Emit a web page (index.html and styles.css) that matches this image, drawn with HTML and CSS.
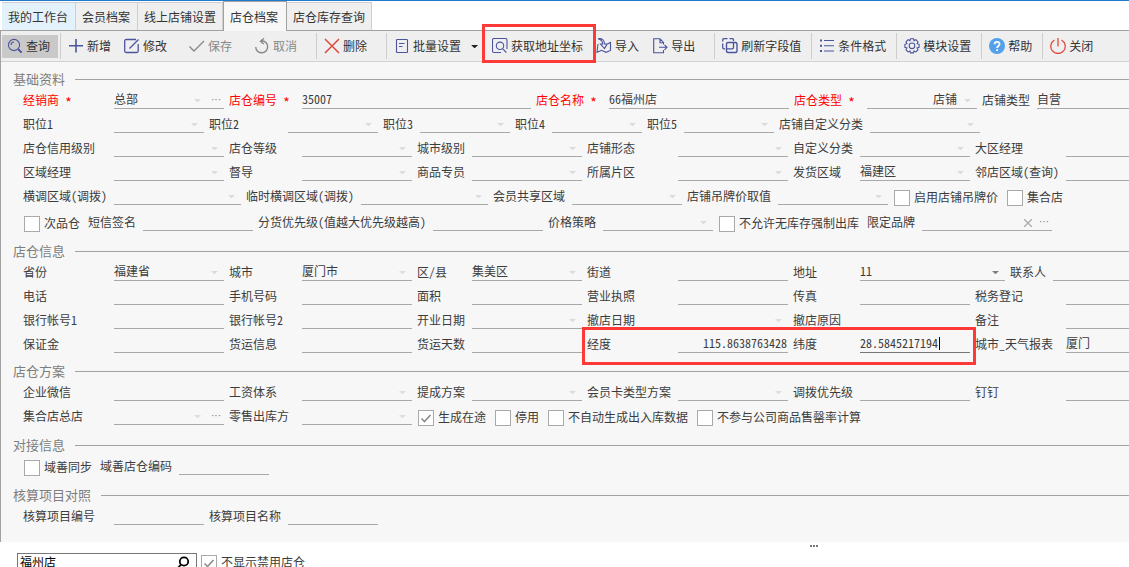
FILE: index.html
```html
<!DOCTYPE html>
<html lang="zh-CN">
<head>
<meta charset="utf-8">
<title>店仓档案</title>
<link rel="stylesheet" href="styles.css">
</head>
<body>
<div class="app">
<nav class="tabs">
  <div class="tab tab-home">我的工作台</div>
  <div class="tab tab-member">会员档案</div>
  <div class="tab tab-online">线上店铺设置</div>
  <div class="tab tab-active">店仓档案</div>
  <div class="tab tab-stock">店仓库存查询</div>
</nav>
<main class="panel">
<div class="toolbar">
  <div class="tool tool-on"><svg class="ico" viewBox="0 0 16 16"><circle cx="7" cy="7" r="5.6"/><path d="M4 7a3 3 0 0 1 3-3"/><path d="M11 11l3.6 3.6" stroke-width="2"/></svg>查询</div>
  <i class="sep"></i>
  <div class="tool"><svg class="ico" viewBox="0 0 16 16"><path d="M8 1v13.500M1 7.700h14" stroke-width="1.600"/></svg>新增</div>
  <div class="tool"><svg class="ico" viewBox="0 0 16 16"><path d="M12 1.500H2.200q-1.500 0-1.500 1.500v10q0 1.500 1.500 1.500h10.500q1.500 0 1.500-1.500V6M6 10l8.500-8.500M5.500 10.500l1-1" stroke-width="1.300"/></svg>修改</div>
  <div class="tool tool-off"><svg class="ico" viewBox="0 0 16 16"><path d="M.5 8.500l4.500 4.500L15 3" stroke-width="1.400"/></svg>保存</div>
  <div class="tool tool-off"><svg class="ico" viewBox="0 0 16 16"><path d="M1.700 9a6 6 0 1 0 6-6.200H7M10 .3L6.500 3.200 9.700 6" stroke-width="1.400"/></svg>取消</div>
  <i class="sep sep-wide"></i>
  <div class="tool"><svg class="ico red" viewBox="0 0 16 16"><path d="M1 1l14 14M15 1L1 15" stroke-width="1.500"/></svg>删除</div>
  <i class="sep sep-wide"></i>
  <div class="tool tool-menu"><svg class="ico" viewBox="0 0 16 16"><rect x="2.500" y="1.500" width="11" height="13" rx=".8"/><path d="M5 5.500h5.500M5 8.500h3.500"/></svg>批量设置<i class="arrow arrow-dark"></i></div>
  <div class="tool"><svg class="ico" viewBox="0 0 16 16"><path d="M9 14.500H2q-1.500 0-1.500-1.500V2Q.5.500 2 .5h11.500q1.500 0 1.500 1.500V11"/><circle cx="8" cy="7.800" r="3.700"/><path d="M10.800 10.800l3.500 3.700"/></svg>获取地址坐标</div>
  <div class="tool"><svg class="ico" viewBox="0 0 16 16"><path d="M2 6L1 14.300l4.500-2 4.500 2 4.500-1.800V4.500l-4 2M2 .8c4-.8 6.500 1.200 6.500 5.200h2.700L8.500 10.500 4.500 6h2.200C6.700 3.500 5 1.500 2 .8"/></svg>导入</div>
  <div class="tool"><svg class="ico" viewBox="0 0 16 16"><path d="M11.500 6.500V4.500L8 .7H1.700v14h9.800V12M8 .7v4h3.500M7 9.300h8M12.500 6.800l2.500 2.500-2.500 2.500"/></svg>导出</div>
  <i class="sep sep-wide"></i>
  <div class="tool"><svg class="ico" viewBox="0 0 16 16"><path d="M11.500 3V2q0-1.300-1.300-1.300H7.500M5.500.7H2Q.7.700.7 2v1.500M.7 5.500v4q0 1.300 1.300 1.300h1" stroke-width="1.300"/><rect x="4.500" y="4.500" width="10.500" height="10" rx="1.500" stroke-width="1.400"/><path d="M4.500 10.800h5.500q1.500 0 1.500-1.300V4.500" stroke-width="1.300"/></svg>刷新字段值</div>
  <i class="sep"></i>
  <div class="tool"><svg class="ico" viewBox="0 0 16 16"><path d="M1 2.500h2M1 7.800h2M1 13h2" stroke-width="2"/><path d="M5 2.500h10M5 7.800h10M5 13h10"/></svg>条件格式</div>
  <i class="sep"></i>
  <div class="tool"><svg class="ico" viewBox="0 0 16 16"><path d="M6.500.8h3l.5 1.800 1.900-.9 2.100 2.100-.9 1.900 2 .6v3l-2 .6.9 1.900-2.100 2.100-1.900-.9-.5 1.900h-3L6 13l-1.900.9L2 11.800l.9-1.900-2-.6v-3l2-.6L2 3.800l2.100-2.100L6 2.600z"/><circle cx="8" cy="7.800" r="2.800"/></svg>模块设置</div>
  <i class="sep"></i>
  <div class="tool"><svg class="ico" viewBox="0 0 16 16"><circle cx="8" cy="8" r="8" fill="#52a1ea" stroke="none"/><path d="M5.600 6.300c0-3.300 5-3.200 5-.2 0 1.900-2.500 1.900-2.500 3.900M8.100 11.300v1.700" stroke="#fff" stroke-width="1.800"/></svg>帮助</div>
  <i class="sep"></i>
  <div class="tool"><svg class="ico red" viewBox="0 0 16 16"><path d="M4.500 2A7.200 7.200 0 1 0 11.500 2M8 0v8.500" stroke-width="1.300"/></svg>关闭</div>
</div>

<section>
  <h2 class="group group-first">基础资料</h2>
  <div class="row cols-main">
    <label class="req">经销商 <b class="star">*</b></label><div class="inp">总部<i class="arrow arrow-in"></i><b class="more">···</b></div>
    <label class="req">店仓编号 <b class="star">*</b></label><div class="inp">35007</div>
    <label class="req">店仓名称 <b class="star">*</b></label><div class="inp">66福州店</div>
    <label class="req">店仓类型 <b class="star">*</b></label><div class="inp inp-type">店铺<i class="arrow"></i></div>
    <label>店铺类型</label><div class="inp">自营</div>
  </div>
  <div class="row cols-post">
    <label>职位1</label><div class="inp"><i class="arrow"></i></div>
    <label>职位2</label><div class="inp"><i class="arrow"></i></div>
    <label>职位3</label><div class="inp"><i class="arrow"></i></div>
    <label>职位4</label><div class="inp"><i class="arrow"></i></div>
    <label>职位5</label><div class="inp"><i class="arrow"></i></div>
    <label>店铺自定义分类</label><div class="inp"><i class="arrow"></i></div>
  </div>
  <div class="row cols-std">
    <label>店仓信用级别</label><div class="inp"><i class="arrow"></i></div>
    <label>店仓等级</label><div class="inp"><i class="arrow"></i></div>
    <label>城市级别</label><div class="inp"><i class="arrow"></i></div>
    <label>店铺形态</label><div class="inp"><i class="arrow"></i></div>
    <label>自定义分类</label><div class="inp"><i class="arrow"></i></div>
    <label>大区经理</label><div class="inp"></div>
  </div>
  <div class="row cols-std">
    <label>区域经理</label><div class="inp"><i class="arrow"></i></div>
    <label>督导</label><div class="inp"><i class="arrow"></i></div>
    <label>商品专员</label><div class="inp"><i class="arrow"></i></div>
    <label>所属片区</label><div class="inp"><i class="arrow"></i></div>
    <label>发货区域</label><div class="inp">福建区<i class="arrow"></i></div>
    <label>邻店区域(查询)</label><div class="inp"></div>
  </div>
  <div class="row cols-region">
    <label>横调区域(调拨)</label><div class="inp"><i class="arrow"></i></div>
    <label>临时横调区域(调拨)</label><div class="inp"><i class="arrow"></i></div>
    <label>会员共享区域</label><div class="inp"><i class="arrow"></i></div>
    <label>店铺吊牌价取值</label><div class="inp"><i class="arrow"></i></div>
    <div class="chk"><i class="box"></i><span>启用店铺吊牌价</span></div>
    <div class="chk"><i class="box"></i><span>集合店</span></div>
  </div>
  <div class="row row-tall cols-brand">
    <div class="chk"><i class="box"></i><span>次品仓</span></div>
    <label>短信签名</label><div class="inp"></div>
    <label>分货优先级(值越大优先级越高)</label><div class="inp"></div>
    <label>价格策略</label><div class="inp"><i class="arrow"></i></div>
    <div class="chk"><i class="box"></i><span>不允许无库存强制出库</span></div>
    <label class="label-brand">限定品牌</label><div class="inp"><svg class="clear" viewBox="0 0 8 8"><path d="M0 0l8 8M8 0L0 8"/></svg><b class="more">···</b></div>
  </div>
</section>

<section>
  <h2 class="group group-tall">店仓信息</h2>
  <div class="row cols-addr">
    <label>省份</label><div class="inp">福建省<i class="arrow"></i></div>
    <label>城市</label><div class="inp">厦门市<i class="arrow"></i></div>
    <label>区/县</label><div class="inp">集美区<i class="arrow"></i></div>
    <label>街道</label><div class="inp"></div>
    <label>地址</label><div class="inp">11<i class="arrow arrow-mid"></i></div>
    <label>联系人</label><div class="inp"></div>
  </div>
  <div class="row cols-std">
    <label>电话</label><div class="inp"></div>
    <label>手机号码</label><div class="inp"></div>
    <label>面积</label><div class="inp"></div>
    <label>营业执照</label><div class="inp"></div>
    <label>传真</label><div class="inp"></div>
    <label>税务登记</label><div class="inp"></div>
  </div>
  <div class="row cols-std">
    <label>银行帐号1</label><div class="inp"></div>
    <label>银行帐号2</label><div class="inp"></div>
    <label>开业日期</label><div class="inp"><i class="arrow"></i></div>
    <label>撤店日期</label><div class="inp"><i class="arrow"></i></div>
    <label>撤店原因</label><div class="inp"></div>
    <label>备注</label><div class="inp"></div>
  </div>
  <div class="row cols-std">
    <label>保证金</label><div class="inp"></div>
    <label>货运信息</label><div class="inp"></div>
    <label>货运天数</label><div class="inp"></div>
    <label>经度</label><div class="inp inp-num">115.8638763428</div>
    <label>纬度</label><div class="inp inp-focus">28.5845217194<i class="caret"></i></div>
    <label>城市_天气报表</label><div class="inp">厦门</div>
  </div>
</section>

<section>
  <h2 class="group group-mid">店仓方案</h2>
  <div class="row cols-std">
    <label>企业微信</label><div class="inp"></div>
    <label>工资体系</label><div class="inp"><i class="arrow"></i></div>
    <label>提成方案</label><div class="inp"><i class="arrow"></i></div>
    <label>会员卡类型方案</label><div class="inp"><i class="arrow"></i></div>
    <label>调拨优先级</label><div class="inp"></div>
    <label>钉钉</label><div class="inp"></div>
  </div>
  <div class="row cols-flags">
    <label>集合店总店</label><div class="inp"><i class="arrow arrow-in"></i><b class="more">···</b></div>
    <label>零售出库方</label><div class="inp"><i class="arrow"></i></div>
    <div class="chk"><i class="box"><svg class="tick" viewBox="0 0 14 14"><path d="M2.500 7.500l3 3 6-6.500"/></svg></i><span>生成在途</span></div>
    <div class="chk"><i class="box"></i><span>停用</span></div>
    <div class="chk"><i class="box"></i><span>不自动生成出入库数据</span></div>
    <div class="chk"><i class="box"></i><span>不参与公司商品售罄率计算</span></div>
  </div>
</section>

<section>
  <h2 class="group group-tall">对接信息</h2>
  <div class="row cols-sync">
    <div class="chk"><i class="box"></i><span>域善同步</span></div>
    <label>域善店仓编码</label><div class="inp"></div>
  </div>
</section>

<section>
  <h2 class="group group-tall">核算项目对照</h2>
  <div class="row cols-account">
    <label>核算项目编号</label><div class="inp"></div>
    <label>核算项目名称</label><div class="inp"></div>
  </div>
</section>
</main>

<footer class="footer">
  <div class="grip"><i></i><i></i><i></i></div>
  <div class="filter">
    <div class="search">福州店<svg class="lens" viewBox="0 0 14 14"><circle cx="8" cy="5.500" r="4.200"/><path d="M5 8.500L1 13"/></svg></div>
    <div class="hide"><i class="box"><svg class="tick" viewBox="0 0 14 14"><path d="M2.500 7.500l3 3 6-6.500"/></svg></i><span>不显示禁用店仓</span></div>
  </div>
</footer>
<div class="mark mark-tool"></div>
<div class="mark mark-coords"></div>
</div>
</body>
</html>
```
FILE: styles.css
```css
* { box-sizing: border-box; }
body {
  margin: 0;
  background: #fff;
  color: #3c3c3c;
  font: 12px/16px "Noto Sans CJK SC", sans-serif;
  font-feature-settings: "hwid";
}
i, b { font-style: normal; font-weight: normal; }
.app {
  position: relative;
  width: 1129px;
  height: 567px;
  overflow: hidden;
  border-top: 1px solid #2079ca;
  white-space: nowrap;
}

/* Tabs */
.tabs {
  display: flex;
  align-items: flex-end;
  height: 30px;
  padding-left: 2px;
  border-bottom: 1px solid #a2a2a2;
}
.tab {
  height: 28px;
  padding: 6px 0 0 6px;
  border: 1px solid #cfcfcf;
  border-bottom: 0;
  border-left: 0;
  background: #efefef;
  color: #333;
}
.tab-home { width: 74px; background: #e3f1fa; }
.tab-member { width: 62px; }
.tab-online { width: 85px; }
.tab-active {
  width: 64px;
  height: 30px;
  margin-bottom: -1px;
  padding-top: 7px;
  border: 1px solid #a2a2a2;
  border-bottom: 0;
  background: #f7f7f7;
}
.tab-stock { width: 85px; }

/* Toolbar */
.panel {
  height: 511px;
  border-left: 1px solid #a2a2a2;
  background: #f7f7f7;
}
.toolbar {
  display: flex;
  align-items: center;
  height: 31px;
  padding-left: 1px;
  border-bottom: 1px solid #d2d2d2;
  background: #efefef;
}
.tool {
  display: flex;
  align-items: center;
  gap: 3px;
  height: 23px;
  flex: none;
  padding: 0 8px 0 5px;
  color: #333;
}
.tool-on { background: #c9c9c9; }
.tool-off { margin-left: 9px; color: #888; }
.tool-menu { width: 98px; }
.tool-menu .arrow { margin-left: 7px; }
.sep {
  width: 1px;
  height: 26px;
  flex: none;
  margin: 0 2px;
  background: #cdcdcd;
}
.sep-wide { margin-left: 11px; }
.ico {
  width: 16px;
  height: 16px;
  flex: none;
  fill: none;
  stroke: #4b549c;
  stroke-width: 1.1;
}
.tool-off .ico { stroke: #888; }
.ico.red { stroke: #df4a3d; }

/* Form groups */
.group {
  display: flex;
  align-items: flex-end;
  gap: 10px;
  margin: 0;
  padding-left: 12px;
  color: #7d7d7d;
  font-size: 13px;
  font-weight: normal;
  line-height: 12px;
}
.group::after {
  content: "";
  flex: 1;
  height: 1px;
  margin-bottom: 5px;
  background: #a2a2a2;
}
.group-first { height: 23px; }
.group-mid { height: 24px; }
.group-tall { height: 26px; }

.row {
  display: grid;
  align-items: end;
  height: 24px;
  padding-left: 17px;
}
.row-tall { height: 26px; }
.cols-main { grid-template-columns: 96px 110px 78px 229px 78px 180px 78px 110px 60px 92px; }
.cols-post { grid-template-columns: 96px 90px 84px 90px 42px 90px 42px 90px 42px 90px 96px 110px; }
.cols-std { grid-template-columns: 96px 110px 78px 110px 60px 110px 96px 110px 72px 110px 96px 63px; }
.cols-region { grid-template-columns: 96px 127px 120px 127px 84px 110px 96px 110px 113px 100px; }
.cols-brand { grid-template-columns: 65px 60px 110px 180px 110px 60px 110px 148px 61px 130px; }
.cols-addr { grid-template-columns: 96px 110px 78px 110px 60px 110px 96px 110px 72px 145px 48px 76px; }
.cols-flags { grid-template-columns: 96px 110px 78px 110px 77px 53px 149px 180px; }
.cols-sync { grid-template-columns: 77px 84px 90px; }
.cols-account { grid-template-columns: 96px 90px 84px 90px; }

label { padding: 0 0 1px 5px; }
.label-brand { padding-left: 6px; }
.req { color: #f00; }
.star {
  font-size: 14px;
  line-height: 0;
  vertical-align: -3px;
}
.inp {
  display: flex;
  align-items: center;
  height: 19px;
  border-bottom: 1px solid #a9a9a9;
}
.inp-type { justify-content: flex-end; }
.inp-type .arrow { margin-left: 7px; }
.inp-num { justify-content: flex-end; padding-right: 1px; }
.inp-focus { border-color: #777; }
.caret { width: 1px; height: 13px; margin-left: 1px; background: #000; }
.arrow {
  width: 7px;
  height: 3px;
  margin: 3px 6px 0 auto;
  background: #dcdcdc;
  clip-path: polygon(0 0, 100% 0, 55% 100%, 45% 100%);
}
.arrow-in { margin-right: 10px; }
.arrow-mid { background: #808080; }
.arrow-dark { margin: 1px 0 0; background: #222; }
.more {
  width: 10px;
  margin: 2px 3px 0 0;
  color: #777;
  font: 10px/12px "Liberation Sans", sans-serif;
}
.clear {
  width: 8px;
  height: 8px;
  margin: 3px 7px 0 auto;
  fill: none;
  stroke: #aaa;
  stroke-width: 1.3;
}
.chk {
  display: flex;
  gap: 5px;
  margin: 0 0 -1px 6px;
}
.chk span, .hide span { margin: -1px 0 0 -1px; }
.box {
  width: 16px;
  height: 16px;
  flex: none;
  border: 1px solid #a9a9a9;
  background: #fff;
}
.tick {
  display: block;
  width: 14px;
  height: 14px;
  fill: none;
  stroke: #8c8c8c;
  stroke-width: 1.6;
}

/* Footer */
.grip {
  display: flex;
  gap: 1px;
  height: 11px;
  padding: 3px 0 0 810px;
}
.grip i { width: 2px; height: 2px; background: #777; }
.filter { display: flex; gap: 4px; padding-left: 17px; }
.search {
  display: flex;
  justify-content: space-between;
  width: 180px;
  height: 20px;
  padding: 0 6px 0 2px;
  border: 1px solid #777;
  color: #000;
}
.lens {
  width: 14px;
  height: 14px;
  margin-top: 2px;
  fill: none;
  stroke: #000;
  stroke-width: 1.8;
}
.hide { display: flex; gap: 5px; padding-top: 2px; }

/* Callout frames over the form */
.mark { position: absolute; border: 3px solid #fd3a38; }
.mark-tool { left: 482px; top: 23px; width: 114px; height: 39px; }
.mark-coords { left: 582px; top: 326px; width: 394px; height: 38px; }
```
